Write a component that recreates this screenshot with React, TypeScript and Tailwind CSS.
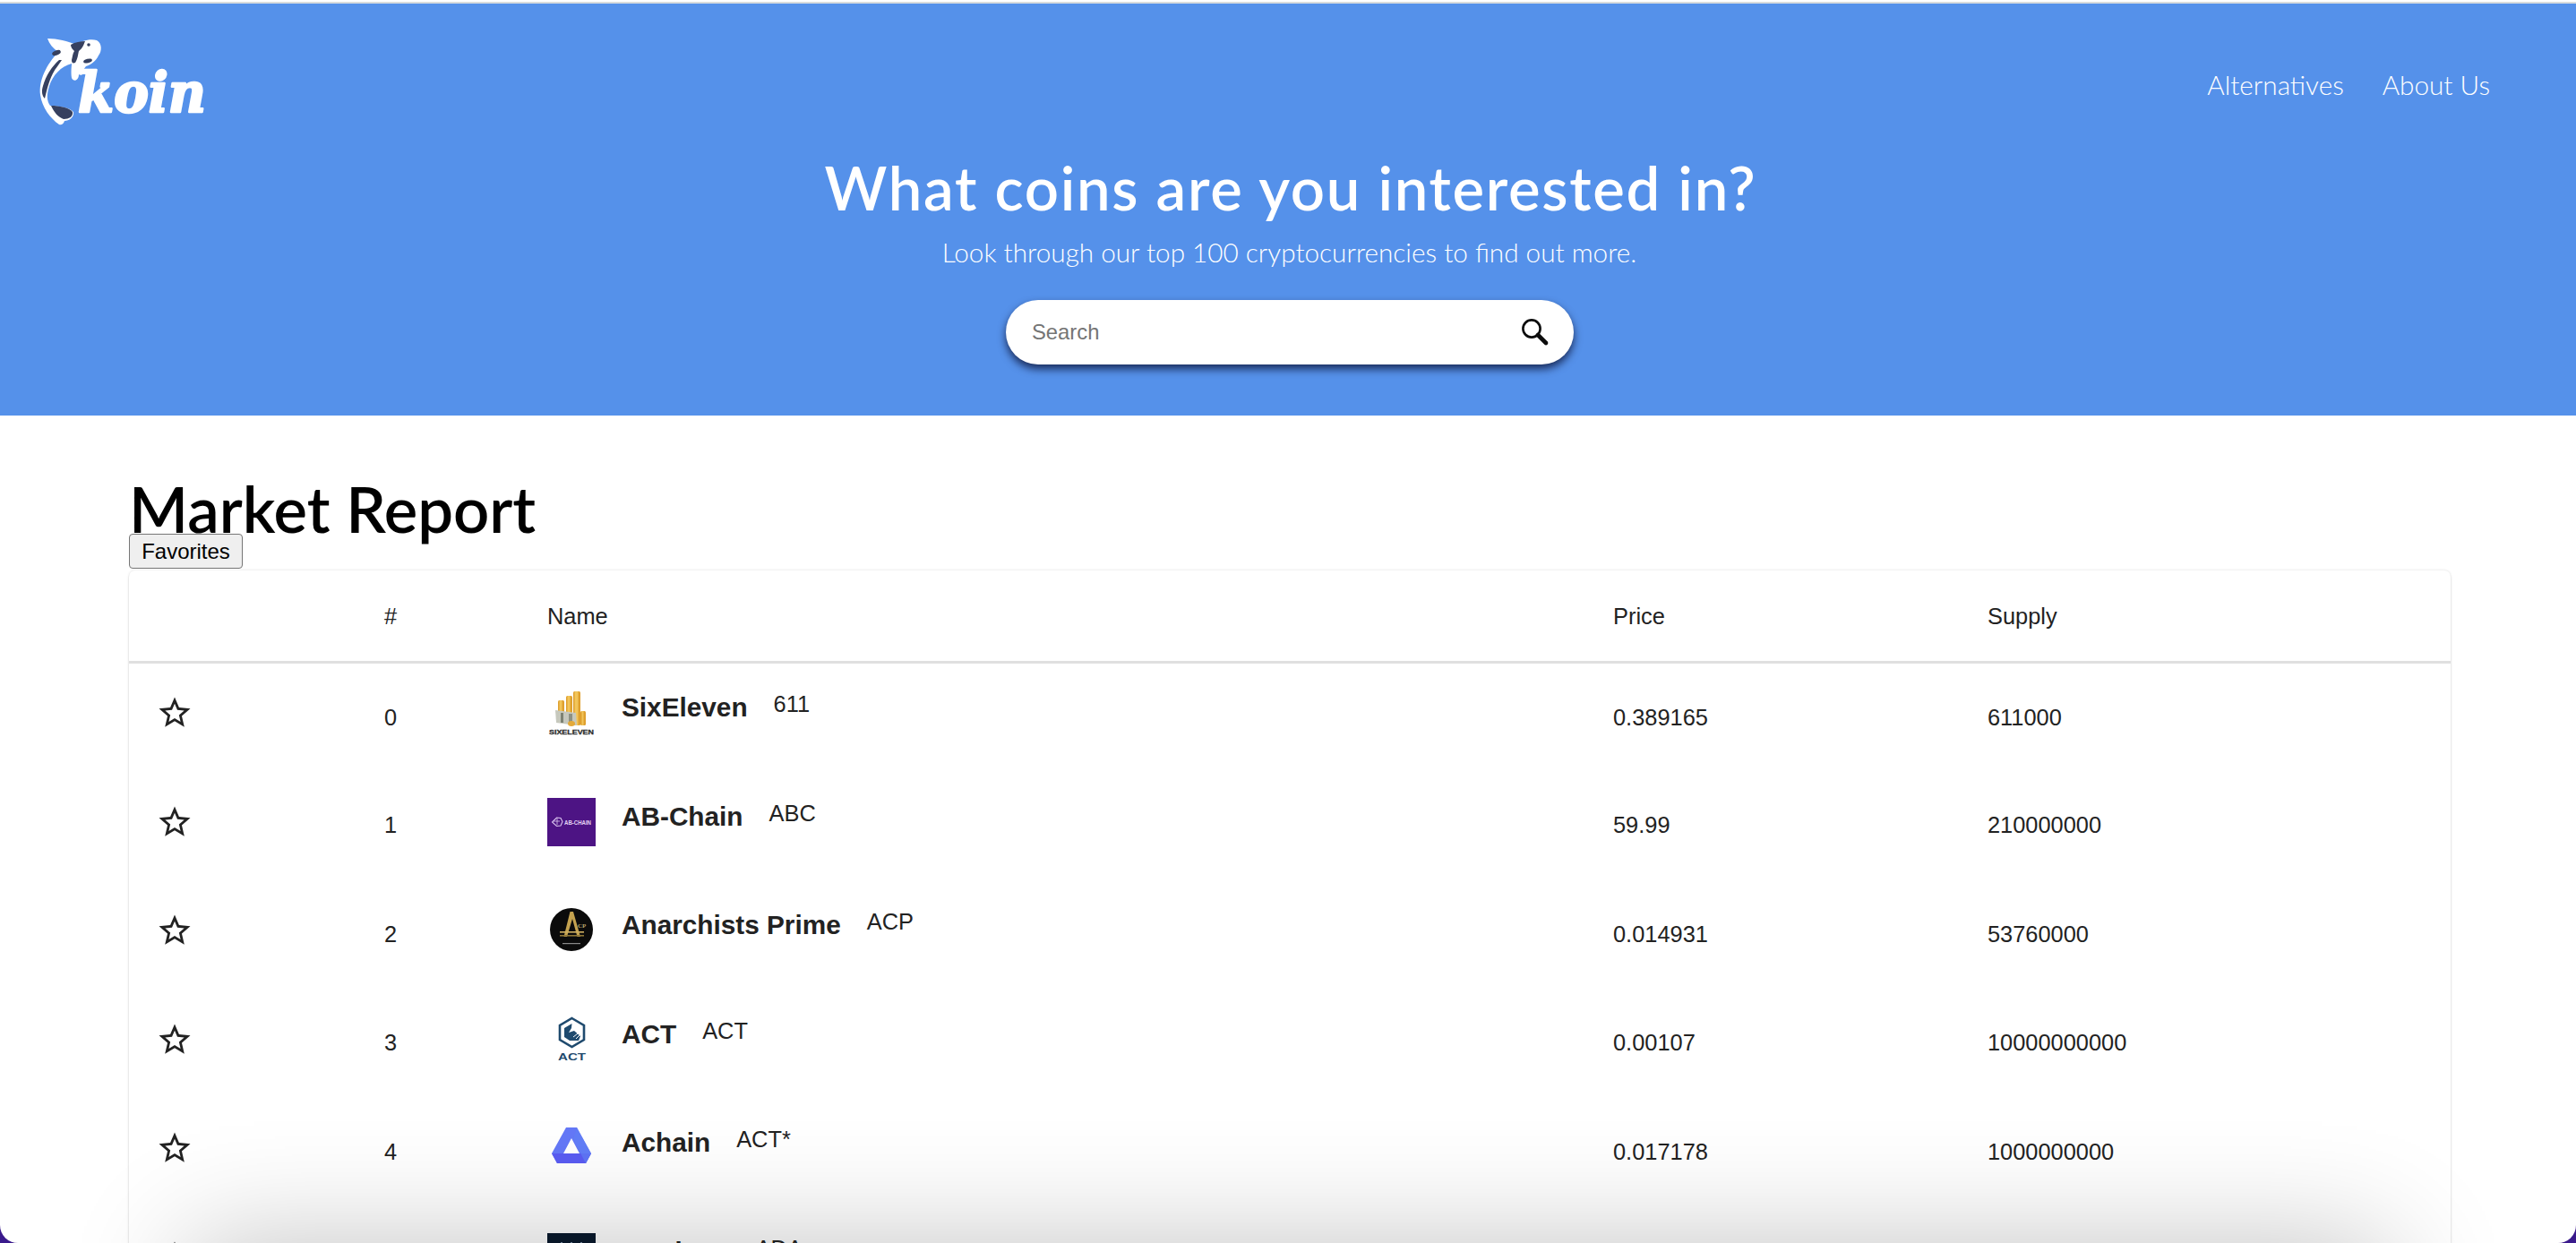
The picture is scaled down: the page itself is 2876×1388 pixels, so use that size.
import React from "react";

const STAR =
  "M22 9.24l-7.19-.62L12 2 9.19 8.63 2 9.24l5.46 4.73L5.82 21 12 17.27 18.18 21l-1.63-7.03L22 9.24zM12 15.4l-3.76 2.27 1-4.28-3.32-2.88 4.38-.38L12 6.1l1.71 4.04 4.38.38-3.32 2.88 1 4.28L12 15.4z";

function KoinLogo() {
  return (
    <svg width="210" height="120" viewBox="0 0 210 120" className="block overflow-visible">
      <path
        d="M23 13 C34 13 46 16 55 20 C60 16 70 13 78 15 C84 18 84 27 80 32 C77 38 72 42 66 44 L63 48 C65 53 60 55 58 53 C58 60 52 62 50 57 C49 50 50 44 50 41 C38 44 29 54 25 66 C22 76 22 82 26 88 C34 88 48 90 52 95 C53 101 47 105 42 105 C41 108 39 110 36 109 C26 102 17 90 15 76 C13 60 22 42 35 28 C29 24 25 19 23 13 Z"
        fill="#ffffff"
      />
      <path d="M49 20 C54 17 60 16 65 16 C63 21 62 24 58 27 C57 31 57 35 54 40 C51 41 50 40 50 37 C51 33 51 30 53 27 C51 25 49 23 49 20 Z" fill="#36405f" />
      <path d="M36 37 C28 44 21 55 18 66 C16 72 17 77 20 80 C22 72 24 62 29 52 C32 46 36 42 39 37 Z" fill="#36405f" />
      <path d="M27 88 C36 88 47 90 51 95 C52 100 47 103 41 103 C35 101 30 95 27 88 Z" fill="#36405f" />
      <ellipse cx="33" cy="29" rx="5" ry="2.6" transform="rotate(-20 33 29)" fill="#36405f" />
      <ellipse cx="68" cy="38" rx="5" ry="2.2" transform="rotate(-15 68 38)" fill="#36405f" />
      <circle cx="69" cy="20" r="1.8" fill="#36405f" />
      <text
        x="57"
        y="95"
        textLength="143"
        lengthAdjust="spacingAndGlyphs"
        fill="#ffffff"
        stroke="#ffffff"
        strokeWidth="2.6"
        strokeLinejoin="round"
        fontFamily="'DejaVu Serif', serif"
        fontWeight="700"
        fontStyle="italic"
        fontSize="62"
      >
        koin
      </text>
    </svg>
  );
}

function SixElevenLogo() {
  const stack = (x: number, y: number, w: number, h: number) => (
    <g>
      <rect x={x} y={y} width={w} height={h} rx="1.5" fill="#dfa02f" />
      <rect x={x + 1.5} y={y} width={w - 4} height={h} fill="#f2c55a" />
    </g>
  );
  return (
    <svg width="54" height="54" viewBox="0 0 54 54" className="block">
      {stack(12, 13, 7, 18)}
      {stack(21, 8, 7, 24)}
      {stack(29, 3, 8, 38)}
      {stack(37, 25, 6, 16)}
      <path d="M9 24 L32 27 L33 41 L10 38 Z" fill="#c6c8bd" />
      <rect x="15" y="27" width="3" height="11" fill="#7d8274" />
      <rect x="24" y="28" width="4" height="11" fill="#8d9184" />
      <ellipse cx="27" cy="39" rx="4" ry="3" fill="#e3a93a" />
      <text x="27" y="51" textAnchor="middle" textLength="50" lengthAdjust="spacingAndGlyphs" fontFamily="'Liberation Sans', sans-serif" fontWeight="700" fontSize="8" fill="#2a2a2a" stroke="#2a2a2a" strokeWidth="0.3">
        SIXELEVEN
      </text>
    </svg>
  );
}

function AbChainLogo() {
  return (
    <svg width="54" height="54" viewBox="0 0 54 54" className="block">
      <rect width="54" height="54" fill="#4d1484" />
      <path d="M10.5 22 L15 22.5 L17 26.5 L15 31 L10.5 31.5 L5.5 27 Z" fill="none" stroke="#d9c3ee" strokeWidth="1.1" />
      <path d="M7 26 L14 26 M11 23 L11 30" stroke="#d9c3ee" strokeWidth="0.8" />
      <text x="19" y="30" textLength="30" lengthAdjust="spacingAndGlyphs" fontFamily="'Liberation Sans', sans-serif" fontWeight="700" fontSize="8" fill="#e4d4f4">
        AB-CHAIN
      </text>
    </svg>
  );
}

function AcpLogo() {
  return (
    <svg width="54" height="54" viewBox="0 0 54 54" className="block">
      <ellipse cx="27" cy="26" rx="24" ry="24" fill="#0b0b0b" />
      <path d="M25.5 6 L29 6 L37 34 L33.5 34 L28 14 L22 34 L18.5 34 Z" fill="#c4a24f" />
      <rect x="14" y="28" width="27" height="1.6" fill="#d0b062" />
      <rect x="14" y="32" width="27" height="1.6" fill="#8c7436" />
      <text x="34" y="24" fontFamily="'Liberation Serif', serif" fontWeight="700" fontSize="7" fill="#b9a56b">
        CP
      </text>
      <rect x="17" y="41" width="20" height="1.2" fill="#8a8a8a" />
    </svg>
  );
}

function ActLogo() {
  return (
    <svg width="54" height="54" viewBox="0 0 54 54" className="block">
      <path d="M27.5 3 L41 11 L41 27 L27.5 35 L14 27 L14 11 Z" fill="none" stroke="#1f4a6e" strokeWidth="2.6" />
      <path d="M27.5 9 L19 14 L19 24 L25 28 L35 28 L37 23 L30 17 L24 19 L27 14 Z" fill="#1f4a6e" />
      <path d="M29 24 L34 20 M32 26 L36 22" stroke="#ffffff" strokeWidth="1" />
      <text x="27.5" y="50" textAnchor="middle" textLength="31" lengthAdjust="spacingAndGlyphs" fontFamily="'Liberation Sans', sans-serif" fontWeight="700" fontSize="11" fill="#1f4a6e">
        ACT
      </text>
    </svg>
  );
}

function AchainLogo() {
  return (
    <svg width="54" height="54" viewBox="0 0 54 54" className="block">
      <path fillRule="evenodd" d="M21 4 L33 4 L49 33 L43 44 L11 44 L5 33 Z M27 16 L18 33 L36 33 Z" fill="#6478f7" />
      <path d="M5 33 L18 33 L36 33 L49 33 L43 44 L11 44 Z" fill="#5a5cf2" />
      <path d="M33 4 L49 33 L43 44 L29 17 Z" fill="#5f7ff6" opacity="0.7" />
    </svg>
  );
}

function DarkLogo() {
  return (
    <svg width="54" height="54" viewBox="0 0 54 54" className="block">
      <rect width="54" height="54" fill="#0a1a2e" />
      <circle cx="16" cy="11" r="1" fill="#9fb4cc" />
      <circle cx="27" cy="11" r="1" fill="#9fb4cc" />
      <circle cx="38" cy="11" r="1" fill="#9fb4cc" />
    </svg>
  );
}

const rows = [
  { i: 0, name: "SixEleven", sym: "611", price: "0.389165", supply: "611000", Logo: SixElevenLogo },
  { i: 1, name: "AB-Chain", sym: "ABC", price: "59.99", supply: "210000000", Logo: AbChainLogo },
  { i: 2, name: "Anarchists Prime", sym: "ACP", price: "0.014931", supply: "53760000", Logo: AcpLogo },
  { i: 3, name: "ACT", sym: "ACT", price: "0.00107", supply: "10000000000", Logo: ActLogo },
  { i: 4, name: "Achain", sym: "ACT*", price: "0.017178", supply: "1000000000", Logo: AchainLogo },
  { i: 5, name: "Cardano", sym: "ADA", price: "0.4", supply: "25927070538", Logo: DarkLogo },
];

export default function App() {
  return (
    <div className="h-[1388px] w-full overflow-hidden bg-[#3a1a8c] font-['Liberation_Sans',sans-serif]">
      <div className="relative h-full w-full overflow-hidden rounded-b-[20px] bg-white pt-[2px]">
        <header className="h-[462px] border-t-2 border-[#d9dcdc] bg-[#5591ea] font-['Lato',sans-serif] text-white">
          <nav className="flex h-[146px] items-start justify-between pr-[96px] pl-[30px] pt-[26px]">
            <KoinLogo />
            <div className="flex gap-[43px] pt-[46px] text-[29.7px] leading-[38px] font-light">
              <a>Alternatives</a>
              <a>About Us</a>
            </div>
          </nav>
          <div className="flex flex-col items-center">
            <h1 className="ml-[6px] pt-[19px] text-[67px] leading-[80px] font-semibold tracking-[1.7px]">What coins are you interested in?</h1>
            <p className="ml-[3px] pt-[14px] text-[29.7px] leading-[38px] font-light">Look through our top 100 cryptocurrencies to find out more.</p>
            <div className="mt-[34px] ml-[4px] flex h-[72px] w-[634px] items-center rounded-[36px] bg-white pr-[26px] pl-[29px] shadow-[0_5px_10px_rgba(0,0,30,0.7)]">
              <input
                placeholder="Search"
                className="min-w-0 flex-1 bg-transparent font-['Liberation_Sans',sans-serif] text-[23.8px] text-black outline-none placeholder:text-[#757575]"
              />
              <svg width="36" height="36" viewBox="0 0 36 36" className="block">
                <circle cx="15" cy="14" r="9.6" fill="none" stroke="#0c0c0c" strokeWidth="2.6" />
                <path d="M22 21 L31 30" stroke="#0c0c0c" strokeWidth="4.6" strokeLinecap="round" />
              </svg>
            </div>
          </div>
        </header>

        <main className="pr-[140px] pl-[144px]">
          <h2 className="pt-[76px] font-['Lato',sans-serif] text-[70.6px] leading-[56px] font-semibold text-black">Market Report</h2>
          <button className="block h-[39px] w-[127px] rounded-[4px] border-[1.5px] border-[#767676] bg-[#efefef] text-[24px] leading-none text-black">
            Favorites
          </button>
          <div className="mt-[2px] rounded-[7px] bg-white shadow-[0_2px_2px_rgba(0,0,0,0.12),0_0_3px_rgba(0,0,0,0.14)]">
            <table className="w-full table-fixed border-collapse text-[25.4px] text-[#222222]">
              <colgroup>
                <col className="w-[257px]" />
                <col className="w-[182px]" />
                <col className="w-[1190px]" />
                <col className="w-[418px]" />
                <col />
              </colgroup>
              <thead>
                <tr className="h-[102px] border-b-[3px] border-[#e0e0e0]">
                  <th />
                  <th className="pt-[2px] pl-[28px] text-left font-normal">#</th>
                  <th className="pt-[2px] pl-[28px] text-left font-normal">Name</th>
                  <th className="pt-[2px] pl-[28px] text-left font-normal">Price</th>
                  <th className="pt-[2px] pl-[28px] text-left font-normal">Supply</th>
                </tr>
              </thead>
              <tbody>
                {rows.map(({ i, name, sym, price, supply, Logo }) => (
                  <tr key={i} className={i % 2 === 0 ? "h-[122px]" : "h-[121px]"}>
                    <td className={i === 0 ? "pt-[34px] pl-[30px] align-top" : "pt-[36px] pl-[30px] align-top"}>
                      <svg width="42" height="42" viewBox="0 0 24 24" fill="#222222" className="block">
                        <path d={STAR} />
                      </svg>
                    </td>
                    <td className="pl-[28px]">{i}</td>
                    <td className={i === 0 ? "pt-[28px] pl-[28px] align-top" : "pt-[30px] pl-[28px] align-top"}>
                      <div className="flex items-start">
                        <Logo />
                        <span className="ml-[29px] pt-[3px] text-[29.75px] leading-[36px] font-bold">{name}</span>
                        <span className="ml-[29px] pt-[2px] leading-[30px]">{sym}</span>
                      </div>
                    </td>
                    <td className="pl-[28px]">{price}</td>
                    <td className="pl-[28px]">{supply}</td>
                  </tr>
                ))}
              </tbody>
            </table>
          </div>
        </main>

        <div className="absolute top-[1388px] right-[210px] left-[210px] h-[400px] shadow-[0_0_125px_rgba(0,0,0,0.24)]" />
      </div>
    </div>
  );
}
